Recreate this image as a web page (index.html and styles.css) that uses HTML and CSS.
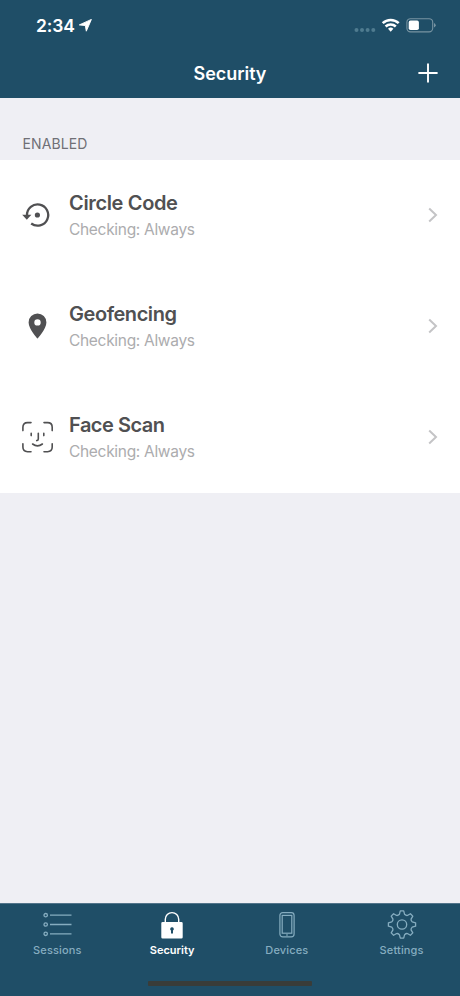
FILE: index.html
```html
<!DOCTYPE html>
<html lang="en">
<head>
<meta charset="utf-8">
<title>Security</title>
<link rel="stylesheet" href="styles.css">
</head>
<body>
<div class="app">
  <header class="header">
    <div class="status">
      <span class="time">2:34</span>
      <svg class="location" width="13" height="13" viewBox="0 0 13 13"><path d="M12.400 .4 7.300 12.200 6.300 6.600.3 5.900z" fill="currentColor" stroke="currentColor" stroke-width=".9" stroke-linejoin="round"/></svg>
      <svg class="indicators" width="84" height="20" viewBox="0 0 84 20">
        <g fill="#4f7b8f"><circle cx="4.500" cy="15" r="2"/><circle cx="10" cy="15" r="2"/><circle cx="15.600" cy="15" r="2"/><circle cx="21.300" cy="15" r="2"/></g>
        <g fill="none" stroke="#fff" stroke-width="2.500"><path d="M30.700 8.200a11.300 11.300 0 0 1 16 0"/><path d="M33.600 11.500a7.200 7.200 0 0 1 10.200 0"/></g>
        <path d="M38.700 16.700l-2.700-2.900a4 4 0 0 1 5.400 0z" fill="#fff"/>
        <rect x="54.900" y="3.700" width="25.800" height="13.200" rx="3.600" fill="none" stroke="#7894a2" stroke-width="1.100"/>
        <rect x="56.700" y="5.600" width="10.200" height="9.400" rx="1.800" fill="#fff"/>
        <path d="M82 8v4.600q1.700-.8 1.700-2.300T82 8z" fill="#7894a2"/>
      </svg>
    </div>
    <div class="nav">
      <h1>Security</h1>
      <svg class="add" width="20" height="20" viewBox="0 0 20 20"><path d="M10 .4v19.200M.4 10h19.200" stroke="#fff" stroke-width="1.900"/></svg>
    </div>
  </header>
  <main>
    <h2>ENABLED</h2>
    <ul class="list">
      <li class="row">
        <svg class="icon" width="32" height="32" viewBox="0 0 32 32"><g fill="none" stroke="#505052" stroke-width="2.300"><path d="M6 16.300A10.600 10.600 0 1 1 10.200 24.500"/></g><path d="M1.200 15.800h9.200L5.800 20.800z" fill="#505052"/><circle cx="16.400" cy="16" r="2.600" fill="#505052"/></svg>
        <div class="label"><strong class="t1">Circle Code</strong><span>Checking: Always</span></div>
        <svg class="chevron" width="10" height="16" viewBox="0 0 10 16"><path d="M1.200 1.500 8 8l-6.800 6.500" fill="none" stroke="#c4c4c6" stroke-width="2"/></svg>
      </li>
      <li class="row">
        <svg class="icon" width="32" height="32" viewBox="0 0 32 32"><path fill-rule="evenodd" d="M16.500 3.500a8.900 8.900 0 0 0-8.900 8.900c0 6.600 8.900 16.200 8.900 16.200s8.900-9.600 8.900-16.200a8.900 8.900 0 0 0-8.900-8.900zm0 5.700a3.200 3.200 0 1 1 0 6.400 3.200 3.200 0 0 1 0-6.400z" fill="#505052"/></svg>
        <div class="label"><strong class="t2">Geofencing</strong><span>Checking: Always</span></div>
        <svg class="chevron" width="10" height="16" viewBox="0 0 10 16"><path d="M1.200 1.500 8 8l-6.800 6.500" fill="none" stroke="#c4c4c6" stroke-width="2"/></svg>
      </li>
      <li class="row">
        <svg class="icon" width="32" height="32" viewBox="0 0 32 32"><g fill="none" stroke="#505052" stroke-width="1.600" stroke-linecap="round"><path d="M1.900 9.600V6.200q0-4.600 4.600-4.600H10M23 1.600h3.600q4.600 0 4.600 4.600v3.400M31.200 22.700v3.400q0 4.600-4.600 4.600H23M10 30.700H6.500q-4.600 0-4.600-4.600v-3.400"/><path d="M10.200 12.400v2.200M22.800 12.400v2.200M17.300 12.300v5.800q0 1.500-1.600 1.500M11.600 23q4.900 3.800 9.800 0"/></g></svg>
        <div class="label"><strong class="t3">Face Scan</strong><span>Checking: Always</span></div>
        <svg class="chevron" width="10" height="16" viewBox="0 0 10 16"><path d="M1.200 1.500 8 8l-6.800 6.500" fill="none" stroke="#c4c4c6" stroke-width="2"/></svg>
      </li>
    </ul>
  </main>
  <footer>
    <nav class="tabs">
      <div class="tab">
        <svg width="30" height="30" viewBox="0 0 30 30" fill="none" stroke="currentColor" stroke-width="1.300"><circle cx="3.700" cy="5.200" r="1.700"/><circle cx="3.700" cy="14.500" r="1.700"/><circle cx="3.700" cy="23.800" r="1.700"/><path d="M8 5.200h21.500M8 14.500h21.500M8 23.800h21.500"/></svg>
        <span>Sessions</span>
      </div>
      <div class="tab active">
        <svg width="30" height="30" viewBox="0 0 30 30"><path d="M8.300 14V9.300a6.700 6.700 0 0 1 13.400 0V14" fill="none" stroke="#fff" stroke-width="1.400"/><path fill-rule="evenodd" d="M5.600 12h18.800q1.300 0 1.300 1.300v14q0 1.300-1.300 1.300H5.600q-1.300 0-1.300-1.300v-14Q4.300 12 5.600 12zM15 17.200a1.800 1.800 0 0 0-1 3.300V23.400h2v-2.900a1.800 1.800 0 0 0-1-3.300z" fill="#fff"/></svg>
        <span>Security</span>
      </div>
      <div class="tab">
        <svg width="30" height="30" viewBox="0 0 30 30" fill="none" stroke="currentColor" stroke-width="1.200"><rect x="7.900" y="2.700" width="14.200" height="24.200" rx="2.800"/><rect x="10.200" y="5.400" width="9.600" height="17.800"/><path d="M14 25h2"/></svg>
        <span>Devices</span>
      </div>
      <div class="tab">
        <svg width="30" height="30" viewBox="-15 -14.500 30 30" fill="none" stroke="currentColor" stroke-width="1.300" stroke-linejoin="round"><circle r="4.700"/><path d="M-2.600-10.200-1.700-13.600H1.700L2.600-10.200Q4 -8.800 5.400-9.050L8.400-10.800 10.800-8.400 9.050-5.400Q8.800-4 10.200-2.600L13.600-1.700V1.700L10.200 2.600Q8.800 4 9.050 5.400L10.800 8.400 8.400 10.800 5.400 9.050Q4 8.800 2.600 10.200L1.700 13.600H-1.700L-2.600 10.200Q-4 8.800-5.400 9.050L-8.400 10.800-10.800 8.400-9.050 5.400Q-8.800 4-10.200 2.600L-13.600 1.700V-1.700L-10.200-2.600Q-8.800-4-9.050-5.400L-10.800-8.400-8.400-10.800-5.400-9.050Q-4-8.800-2.600-10.200z"/></svg>
        <span>Settings</span>
      </div>
    </nav>
    <div class="home"></div>
  </footer>
</div>
</body>
</html>
```
FILE: styles.css
```css
* { box-sizing: border-box; }
body { margin: 0; font-family: Inter, "Liberation Sans", sans-serif; }
h1, h2, ul { margin: 0; padding: 0; }
svg { display: block; flex: none; }
.app { width: 460px; height: 996px; display: flex; flex-direction: column; background: #efeff4; }
.header { height: 98px; background: #1f4e67; color: #fff; }
.status { height: 50px; display: flex; align-items: center; padding: 0 24px 0 36px; }
.time { font-size: 17.500px; font-weight: 600; letter-spacing: -.1px; }
.location { margin-left: 4px; }
.indicators { margin-left: auto; }
.nav { height: 48px; display: grid; grid-template-columns: 1fr auto 1fr; align-items: center; padding: 0 22px; }
h1 { grid-column: 2; font-size: 18px; line-height: 48px; font-weight: 600; letter-spacing: -.05px; }
.add { justify-self: end; margin-top: -2px; }
main { flex: 1; }
h2 { height: 62px; padding: 34px 23px 0 22.500px; font-size: 14px; line-height: 24px; font-weight: 400; color: #707076; letter-spacing: .1px; }
.list { list-style: none; background: #fff; }
.row { height: 111px; padding: 0 22px 0 21px; display: flex; align-items: flex-start; }
.icon { margin-top: 39px; }
.label { display: flex; flex-direction: column; margin: 30px 0 0 16px; flex: 1; }
.label strong { font-size: 20px; line-height: 26px; font-weight: 600; color: #505052; }
.t1 { letter-spacing: -.35px; }
.t2 { letter-spacing: -.45px; }
.t3 { letter-spacing: -.5px; }
.label span { font-size: 15.500px; line-height: 26px; color: #acacae; margin-top: 1px; letter-spacing: -.31px; }
.chevron { margin-top: 47px; }
footer { height: 93px; background: #1f4e67; border-top: 1px solid #52748a; }
.tabs { height: 80px; display: grid; grid-template-columns: repeat(4, 1fr); padding-right: 1px; }
.tab { display: flex; flex-direction: column; align-items: center; padding-top: 6px; color: #86adc0; }
.tab span { font-size: 11px; line-height: 16px; font-weight: 500; letter-spacing: .15px; margin-top: 2px; }
.tab.active { color: #fff; }
.tab.active span { font-weight: 600; letter-spacing: 0; }
.home { width: 164px; height: 5px; margin: -3px auto 0; border-radius: 1px; background: #393c39; }
```
